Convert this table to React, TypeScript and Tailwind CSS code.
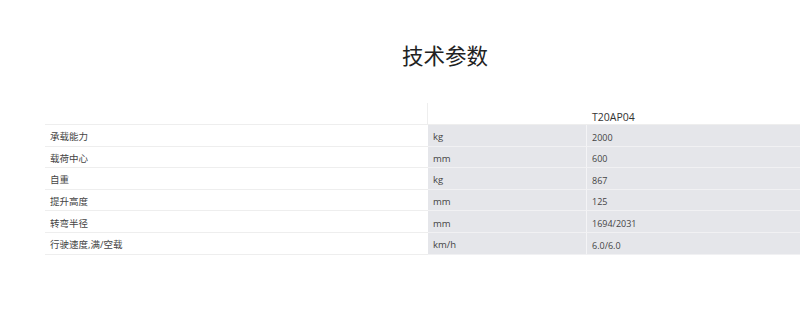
import React from "react";

const rows: [string, string, string][] = [
  ["承载能力", "kg", "2000"],
  ["载荷中心", "mm", "600"],
  ["自重", "kg", "867"],
  ["提升高度", "mm", "125"],
  ["转弯半径", "mm", "1694/2031"],
  ["行驶速度,满/空载", "km/h", "6.0/6.0"],
];

export default function App() {
  return (
    <div
      className="w-[800px] h-[320px] overflow-hidden bg-white text-[#333]"
      style={{ fontFamily: '"Open Sans", "Noto Sans CJK SC", sans-serif' }}
    >
      <div className="ml-[45px] w-[800px]">
        <div className="pt-[41px] h-[103px]">
          <h1 className="text-center text-[21.5px] leading-[30px] text-[#222]">技术参数</h1>
        </div>
        <div className="flex h-[22px] border-b border-[#eeeeee]">
          <div className="w-[383px] border-r border-[#eeeeee]"></div>
          <div className="w-[158px]"></div>
          <div className="flex-1 flex items-center pt-[9px] pl-[6px] text-[10.5px] text-[#333]">T20AP04</div>
        </div>
        {rows.map((r, i) => (
          <div key={i} className="flex h-[21.6px]">
            <div className="w-[383px] flex items-center pt-[4px] pl-[5px] text-[9.5px] text-[#444] border-b border-[#eeeeee]">
              {r[0]}
            </div>
            <div className="w-[158px] flex items-center pt-[4px] pl-[5px] text-[9.5px] text-[#444] bg-[#e5e6ea] border-b border-[#f1f1f3]">
              {r[1]}
            </div>
            <div className="flex-1 flex items-center pt-[4px] pl-[5px] text-[9px] text-[#444] bg-[#e5e6ea] border-l border-[#f4f4f6] border-b border-b-[#f1f1f3]">
              {r[2]}
            </div>
          </div>
        ))}
      </div>
    </div>
  );
}
